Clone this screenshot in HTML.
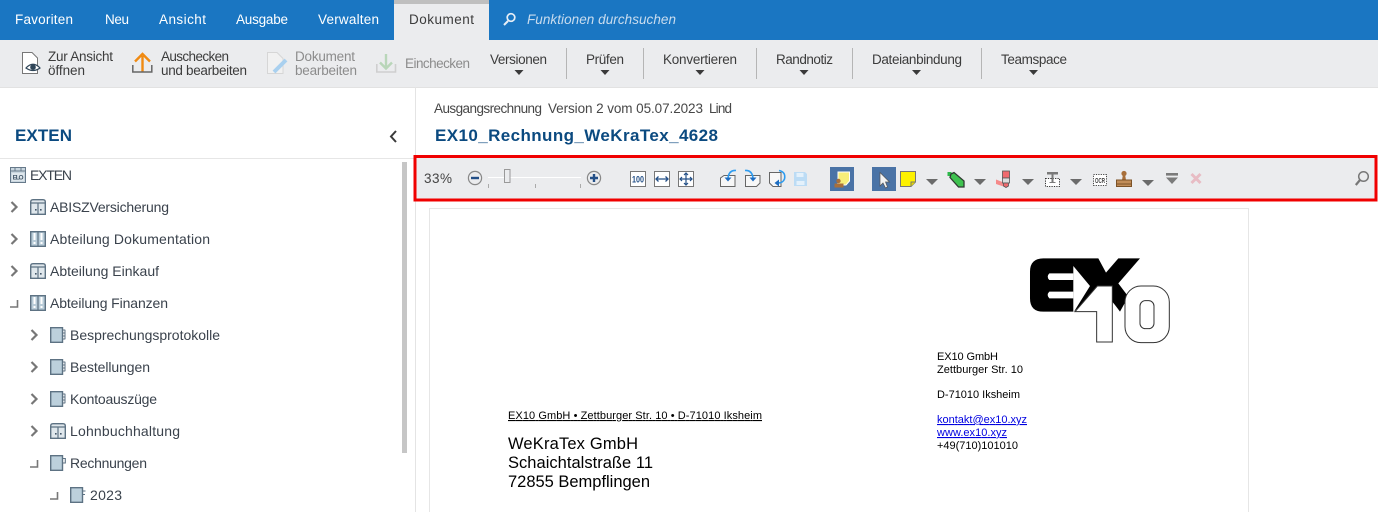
<!DOCTYPE html>
<html lang="de"><head><meta charset="utf-8"><title>EX10</title>
<style>
html,body{margin:0;padding:0;background:#fff;width:1378px;height:512px;overflow:hidden}
svg{display:block}
text{font-family:"Liberation Sans",sans-serif;font-size:13.5px;fill:#3c3c3c}
.w{fill:#fff}
.t{font-size:14px;fill:#3a424c}
.g{fill:#8c8c8c}
.d{fill:#000;font-size:11px}
.a{fill:#000;font-size:16.5px}
.l{fill:#0000e0;font-size:11px;text-decoration:underline}
.b{font-weight:bold;fill:#0b4a80}
</style></head><body>
<svg width="1378" height="512" viewBox="0 0 1378 512" xmlns="http://www.w3.org/2000/svg">
<defs>
<g id="chev"><path d="M11.5 -5 L16.5 0 L11.5 5" fill="none" stroke="#777" stroke-width="2.2"/></g>
<g id="corner"><path d="M10 4 H17.5 V-3" fill="none" stroke="#777" stroke-width="1.6"/></g>
<g id="cab"><path d="M.7 15.3 V3 Q.7 .7 3 .7 H13 Q15.3 .7 15.3 3 V15.3 Z" fill="#dfe7ec" stroke="#5d7283" stroke-width="1.4"/><path d="M8 4 V15 M1 4 H15" stroke="#5d7283" stroke-width="1.2" fill="none"/><rect x="5" y="10" width="1.6" height="1.6" fill="#44586a"/><rect x="10" y="10" width="1.6" height="1.6" fill="#44586a"/></g>
<g id="bind"><rect x=".7" y=".7" width="14.6" height="14.6" fill="#b9ccd8" stroke="#5d7283" stroke-width="1.4"/><path d="M8 1 V15" stroke="#5d7283" stroke-width="1.2"/><path d="M4.5 2 V9 M11.5 2 V9 M4.5 11 V13 M11.5 11 V13" stroke="#fff" stroke-width="2"/></g>
<g id="fold"><path d="M.7 .7 H12.5 V15.3 H.7 Z" fill="#bcd0dc" stroke="#5d7283" stroke-width="1.4"/><path d="M12.5 3 H15.3 M12.5 6 H15.3 M12.5 9 H15.3 M12.5 12 H15.3 M15 3 V12" stroke="#5d7283" stroke-width="1" fill="none"/></g>
<g id="foldb"><path d="M.7 .7 H12.5 V15.3 H.7 Z" fill="#bcd0dc" stroke="#5d7283" stroke-width="1.4"/><path d="M12.5 3.5 H15.3 V8 H12.5" stroke="#5d7283" stroke-width="1.1" fill="none"/></g>
<g id="note"><path d="M.7 .7 H12.5 V15.3 H.7 Z" fill="#bcd0dc" stroke="#5d7283" stroke-width="1.4"/><path d="M12.5 4 H15.5 M12.5 7.5 H15" stroke="#5d7283" stroke-width="1.1" fill="none"/></g>
<path id="dd" d="M0 0 H12 L6 6 Z" fill="#6b6b6b"/>
<path id="da" d="M0 0 H9 L4.5 5 Z" fill="#3a3a3a"/>
</defs>

<rect width="1378" height="512" fill="#fff"/>
<!-- ribbon tabs -->
<rect width="1378" height="40" fill="#1a76c2"/>
<rect x="394" width="95" height="40" fill="#ebecee"/>
<rect x="394" width="95" height="4" fill="#bfbfbf"/>
<text class="w" x="15" y="24" textLength="58">Favoriten</text>
<text class="w" x="105" y="24" textLength="24">Neu</text>
<text class="w" x="159" y="24" textLength="47">Ansicht</text>
<text class="w" x="236" y="24" textLength="52">Ausgabe</text>
<text class="w" x="318" y="24" textLength="61">Verwalten</text>
<text x="409" y="24" textLength="65">Dokument</text>
<circle cx="511" cy="17.5" r="3.8" fill="none" stroke="#e6eef6" stroke-width="1.7"/><path d="M508 21 L504 25" stroke="#e6eef6" stroke-width="2"/>
<text x="527" y="24" textLength="149" style="font-style:italic;fill:#c9dcee">Funktionen durchsuchen</text>

<!-- toolbar -->
<rect y="40" width="1378" height="47" fill="#ebecee"/>
<rect y="87" width="1378" height="1" fill="#e2e2e2"/>
<path d="M22.5 52.5 H32 L37.5 58 V73.5 H22.5 Z" fill="#fff" stroke="#777" stroke-width="1"/>
<path d="M26 68 Q33 60.5 40 68 Q33 73 26 68 Z" fill="#fff" stroke="#2f4558" stroke-width="1.2"/><circle cx="33" cy="67.2" r="2.8" fill="#2f4558"/>
<text x="48" y="61" textLength="65">Zur Ansicht</text>
<text x="48" y="75" textLength="37">öffnen</text>
<path d="M142.5 72 V56 M135 61.5 L142.5 54 L150 61.5" fill="none" stroke="#f08a12" stroke-width="2.4"/>
<path d="M132.8 65 V72 H151.8 V65" fill="none" stroke="#666" stroke-width="1.5"/>
<text x="161" y="61" textLength="68">Auschecken</text>
<text x="161" y="75" textLength="86">und bearbeiten</text>
<path d="M267.5 52.5 H277 L283 58.5 V73.5 H267.5 Z" fill="#f1f1f1" stroke="#d6d6d6" stroke-width="1"/>
<path d="M274 72 L286 60" stroke="#a9d0ef" stroke-width="4"/>
<text class="g" x="295" y="61" textLength="60">Dokument</text>
<text class="g" x="295" y="75" textLength="62">bearbeiten</text>
<path d="M386 54 V68 M380 62.5 L386 68.5 L392 62.5" fill="none" stroke="#b9d6b9" stroke-width="2.4"/>
<path d="M376.8 64 V72 H395.5 V64" fill="none" stroke="#cfcfcf" stroke-width="1.6"/>
<text class="g" x="405" y="68" textLength="65">Einchecken</text>
<text x="490" y="64" textLength="57">Versionen</text>
<text x="586" y="64" textLength="38">Prüfen</text>
<text x="663" y="64" textLength="74">Konvertieren</text>
<text x="776" y="64" textLength="57">Randnotiz</text>
<text x="872" y="64" textLength="90">Dateianbindung</text>
<text x="1001" y="64" textLength="66">Teamspace</text>
<use href="#da" x="514.5" y="70"/><use href="#da" x="600.5" y="70"/><use href="#da" x="695.5" y="70"/><use href="#da" x="799.5" y="70"/><use href="#da" x="912" y="70"/><use href="#da" x="1029" y="70"/>
<path d="M566.5 48 V79 M643.5 48 V79 M756.5 48 V79 M852.5 48 V79 M981.5 48 V79" stroke="#b5b5b5" stroke-width="1"/>

<!-- left panel -->
<rect x="415" y="87" width="1" height="425" fill="#e4e4e4"/>
<text class="b" x="15" y="141" textLength="57" style="font-size:17px">EXTEN</text>
<path d="M396 131 L391 136.5 L396 142" fill="none" stroke="#3a3a3a" stroke-width="2"/>
<rect y="158" width="415" height="1" fill="#e6e6e6"/>
<rect x="402" y="162" width="5" height="291" fill="#c6c6c6"/>

<g transform="translate(10,167)"><rect x=".5" y=".5" width="15" height="15" fill="#c9d6df" stroke="#66798a"/><path d="M1 4 H15 M5 1 V4 M11 1 V4" stroke="#66798a" fill="none"/><rect x="2" y="6" width="12" height="8" fill="#dfe7ec"/><text x="2.6" y="12.5" textLength="11" style="font-size:6.5px;font-weight:bold;fill:#44586a">ELO</text></g>
<text class="t" x="30" y="180" textLength="42">EXTEN</text>

<use href="#chev" y="207"/><use href="#cab" x="30" y="199"/><text class="t" x="50" y="212" textLength="119">ABISZVersicherung</text>
<use href="#chev" y="239"/><use href="#bind" x="30" y="231"/><text class="t" x="50" y="244" textLength="160">Abteilung Dokumentation</text>
<use href="#chev" y="271"/><use href="#cab" x="30" y="263"/><text class="t" x="50" y="276" textLength="109">Abteilung Einkauf</text>
<use href="#corner" y="303"/><use href="#bind" x="30" y="295"/><text class="t" x="50" y="308" textLength="118">Abteilung Finanzen</text>
<use href="#chev" x="20" y="335"/><use href="#fold" x="50" y="327"/><text class="t" x="70" y="340" textLength="150">Besprechungsprotokolle</text>
<use href="#chev" x="20" y="367"/><use href="#fold" x="50" y="359"/><text class="t" x="70" y="372" textLength="80">Bestellungen</text>
<use href="#chev" x="20" y="399"/><use href="#fold" x="50" y="391"/><text class="t" x="70" y="404" textLength="87">Kontoauszüge</text>
<use href="#chev" x="20" y="431"/><use href="#cab" x="50" y="423"/><text class="t" x="70" y="436" textLength="110">Lohnbuchhaltung</text>
<use href="#corner" x="20" y="463"/><use href="#foldb" x="50" y="455"/><text class="t" x="70" y="468" textLength="77">Rechnungen</text>
<use href="#corner" x="40" y="495"/><use href="#note" x="70" y="487"/><text class="t" x="90" y="500" textLength="32">2023</text>

<!-- header -->
<text x="434" y="113" textLength="108" style="fill:#474747">Ausgangsrechnung</text>
<text x="548" y="113" textLength="155" style="fill:#474747">Version 2 vom 05.07.2023</text>
<text x="709" y="113" textLength="23" style="fill:#474747">Lind</text>
<text class="b" x="435" y="141" textLength="283" style="font-size:17px">EX10_Rechnung_WeKraTex_4628</text>

<!-- viewer toolbar -->
<rect x="415" y="156.5" width="961" height="43.5" fill="#ebecee" stroke="#f00000" stroke-width="3"/>
<text x="424" y="183" textLength="28" style="fill:#444">33%</text>
<circle cx="475" cy="178" r="6.6" fill="none" stroke="#888" stroke-width="1.2"/><path d="M471 178 H479" stroke="#234f87" stroke-width="2.4"/>
<rect x="488" y="177" width="93" height="1" fill="#fff"/>
<rect x="504.5" y="169.5" width="5.5" height="13" fill="#ebecee" stroke="#999"/>
<path d="M488.5 184 V188 M535.5 184 V188 M580.5 184 V188" stroke="#aaa"/>
<circle cx="594" cy="178" r="6.6" fill="none" stroke="#888" stroke-width="1.2"/><path d="M590 178 H598 M594 174 V182" stroke="#234f87" stroke-width="2.4"/>
<rect x="630.5" y="171.5" width="15" height="15" fill="#fff" stroke="#777"/><text x="632" y="182.500" textLength="12" lengthAdjust="spacingAndGlyphs" style="font-size:9px;font-weight:bold;fill:#234f87">100</text>
<rect x="654.5" y="171.5" width="15" height="15" fill="#fff" stroke="#777"/><path d="M656.5 179 H667.5 M658.5 176.5 L656 179 L658.5 181.5 M665.5 176.5 L668 179 L665.5 181.5" fill="none" stroke="#234f87" stroke-width="1.3"/>
<rect x="678.5" y="171.5" width="15" height="15" fill="#fff" stroke="#777"/><path d="M680 179 H692 M686 173 V185 M682 177 L680 179 L682 181 M690 177 L692 179 L690 181 M684 175 L686 173 L688 175 M684 183 L686 185 L688 183" fill="none" stroke="#234f87" stroke-width="1.2"/>
<path d="M720.5 186.5 V178 L724 175.5 H735 V186.5 Z" fill="#f7f7f7" stroke="#666"/>
<path d="M736 170.5 Q729 170 728 178" fill="none" stroke="#2d9cf0" stroke-width="1.6"/><path d="M724.5 177.5 H731.5 L728 181.5 Z" fill="#1e6cc0"/>
<path d="M745.5 175.5 H760 V183 L756.5 186.5 H745.5 Z" fill="#f7f7f7" stroke="#666"/>
<path d="M745 170.5 Q752 170 753 178" fill="none" stroke="#2d9cf0" stroke-width="1.6"/><path d="M749.5 177.5 H756.5 L753 181.5 Z" fill="#1e6cc0"/>
<path d="M769.5 172.5 H781 V186.5 H773 L769.5 183 Z" fill="#f7f7f7" stroke="#666"/>
<path d="M779 170.5 Q786 172 784.500 179 Q783 183 778 183" fill="none" stroke="#2d9cf0" stroke-width="1.6"/><path d="M779 179.500 V186.500 L774.500 183 Z" fill="#1e6cc0"/>
<path d="M794 172 H805 L807 174 V186 H794 Z" fill="#bcdcf5"/><rect x="796.500" y="173" width="7" height="4" fill="#e4f1fb"/><rect x="796.500" y="181" width="8" height="4" fill="#e4f1fb"/>

<rect x="830" y="167" width="24" height="24" fill="#4a73a6"/>
<path d="M838 172 H849.500 V181 L846 185 H838 Z" fill="#f7ee7a" stroke="#fff"/>
<circle cx="838.500" cy="181" r="2.200" fill="#a86f3a"/><rect x="834.500" y="183.500" width="9" height="4" fill="#a86f3a"/>
<rect x="872" y="167" width="24" height="24" fill="#4a73a6"/>
<path d="M880 172.500 V186 L883 183 L885.500 188 L887.500 187 L885.500 182 H889.500 Z" fill="#f2f2f2" stroke="#555" stroke-width=".7"/>
<path d="M900.500 171.500 H915.500 V182 L911 186.500 H900.500 Z" fill="#fdf100" stroke="#777"/><path d="M911 186.500 V182 H915.500" fill="#e5d800" stroke="#777"/>
<use href="#dd" x="926" y="179"/>
<rect x="947.500" y="172" width="4" height="4" fill="#2db84a"/>
<path d="M951 174 L954 172.500 L964 181 V187 H958.500 L950 177.500 Z" fill="#3ec24f" stroke="#2f3a32" stroke-width="1.300"/>
<use href="#dd" x="974" y="179"/>
<path d="M996 179.500 L1005 183 V187 L996 184 Z" fill="#f58a8a"/>
<rect x="1002.500" y="171" width="7" height="7" fill="#ef6a6e" stroke="#555" stroke-width=".8"/><rect x="1002.500" y="178" width="7" height="5" fill="#ddd" stroke="#555" stroke-width=".8"/><path d="M1003.500 183 H1008.500 V186 L1006 187.500 L1003.500 186 Z" fill="#ef6a6e" stroke="#555" stroke-width=".8"/>
<use href="#dd" x="1022" y="179"/>
<rect x="1045.500" y="178.500" width="14" height="8" fill="#fff" stroke="#333" stroke-dasharray="1.200 1.200"/>
<path d="M1047 172 H1058 V174.500 H1047 Z M1051.500 172 H1053.500 V182 H1051.500 Z M1049.500 182 H1055.500 V183 H1049.500 Z" fill="#7a7a7a"/>
<use href="#dd" x="1070" y="179"/>
<rect x="1093.500" y="174.500" width="13" height="11" fill="#fff" stroke="#444" stroke-dasharray="1.200 1.200"/>
<text x="1095" y="183" textLength="10" lengthAdjust="spacingAndGlyphs" style="font-size:7.500px;font-weight:bold;fill:#444">OCR</text>
<circle cx="1124" cy="173.500" r="2.600" fill="#a86f3a"/><path d="M1122.800 175.500 H1125.200 L1126 180 H1122 Z" fill="#a86f3a"/><rect x="1116.500" y="180" width="15" height="6.500" fill="#c28d58" stroke="#7c5227"/><path d="M1117 184 H1131" stroke="#7c5227"/>
<use href="#dd" x="1142" y="180"/>
<rect x="1166" y="173" width="12" height="2.600" fill="#7b7b7b"/><path d="M1166 177.500 H1178 L1172 184 Z" fill="#7b7b7b"/>
<path d="M1191.500 174 L1200.500 183 M1200.500 174 L1191.500 183" stroke="#e8bcc4" stroke-width="3"/>
<circle cx="1363.500" cy="176.500" r="4.800" fill="none" stroke="#777" stroke-width="1.500"/><path d="M1360 180 L1355.800 185" stroke="#777" stroke-width="2.200"/>

<!-- document page -->
<rect x="429.500" y="208.500" width="819" height="320" fill="#fff" stroke="#e6e6e6"/>
<g transform="translate(1010,240) scale(.3333)">
<path d="M100 55 H265 L288 98 L325 55 H390 L325 130 L355 170 L330 215 L315 195 L270 140 L192 215 H100 Q60 215 60 175 V95 Q60 55 100 55 Z" fill="#000"/>
<path d="M190 100 H118 Q108 110 118 120 H190 Z M190 155 H118 Q108 165 118 175 H190 Z" fill="#fff"/>
<path d="M190 78 L240 138 L192 215 H190 Z" fill="#fff"/>
<path d="M195 215 L262 138 H307 V306 H260 V215 Z" fill="#fff" stroke="#333" stroke-width="3"/>
<rect x="345" y="138" width="133" height="170" rx="48" fill="#fff" stroke="#333" stroke-width="3"/>
<rect x="390" y="182" width="42" height="84" rx="16" fill="#fff" stroke="#333" stroke-width="3"/>
</g>
<text class="d" x="937" y="360" textLength="61">EX10 GmbH</text>
<text class="d" x="937" y="373" textLength="86">Zettburger Str. 10</text>
<text class="d" x="937" y="398" textLength="83">D-71010 Iksheim</text>
<text class="l" x="937" y="423" textLength="90">kontakt@ex10.xyz</text>
<text class="l" x="937" y="436" textLength="70">www.ex10.xyz</text>
<text class="d" x="937" y="449" textLength="81">+49(710)101010</text>
<text class="d" x="508" y="419" textLength="254" style="text-decoration:underline">EX10 GmbH • Zettburger Str. 10 • D-71010 Iksheim</text>
<text class="a" x="508" y="449" textLength="130">WeKraTex GmbH</text>
<text class="a" x="508" y="468" textLength="145">Schaichtalstraße 11</text>
<text class="a" x="508" y="487" textLength="142">72855 Bempflingen</text>
</svg>
</body></html>
